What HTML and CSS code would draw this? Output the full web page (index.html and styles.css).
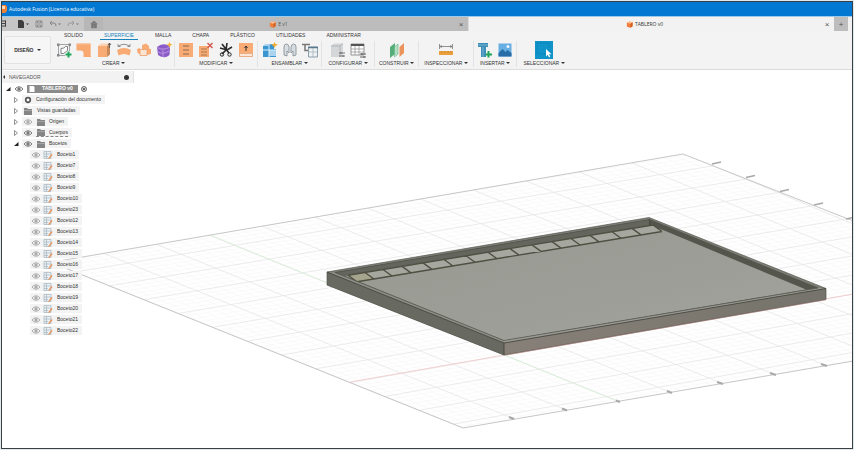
FILE: index.html
```html
<!DOCTYPE html>
<html lang="es">
<head>
<meta charset="utf-8">
<title>Autodesk Fusion (Licencia educativa)</title>
<link rel="stylesheet" href="styles.css">
</head>
<body>
<svg class="defs" aria-hidden="true">
  <symbol id="eye" viewBox="0 0 10 8"><path d="M1 4Q5-.5 9 4Q5 8.500 1 4Z" fill="#fff" stroke="currentColor"/><circle cx="5" cy="4" r="1.700" fill="currentColor"/></symbol>
  <symbol id="folder" viewBox="0 0 10 8"><path d="M1 1h3l1 1h4v6H1z" fill="#858585"/><path d="M1 3.500h8" stroke="#b5b5b5" stroke-width=".7"/></symbol>
  <symbol id="sketch" viewBox="0 0 10 8"><path d="M1 .5h7v7H1zM3.500.5v7M1 3h7M1 5.500h4" fill="#edf1f4" stroke="#a5b4bf" stroke-width=".7"/><path d="M5 7.500L8.500 3l1 1L6.500 7.500z" fill="#e98b50"/></symbol>
  <symbol id="closed" viewBox="0 0 6 8"><path d="M1.500 1.500L4.500 4L1.500 6.500z" fill="#fff" stroke="#777" stroke-width=".8"/></symbol>
  <symbol id="open" viewBox="0 0 6 8"><path d="M5.500 2v4H1z" fill="#222"/></symbol>
  <symbol id="cube" viewBox="0 0 8 8"><path d="M1 2l3-1.500L7.500 1.500V6L5 7.800L1 6.500z" fill="#ee7f3c"/><path d="M1 2l3-1.500L7.500 1.500L5 3z" fill="#ffc299"/><path d="M5 3l2.500-1.500V6L5 7.800z" fill="#d4601f"/></symbol>
</svg>
<div class="window">
  <header class="title"><svg viewBox="0 0 6 8"><path d="M0 0h4l1 2v4l-2 2H0z" fill="#ef8136"/><path d="M0 1h3v3H0z" fill="#ffd9b8"/></svg><h1>Autodesk Fusion (Licencia educativa)</h1></header>
  <div class="docs">
    <div class="quick">
      <button aria-label="Panel de datos"><svg viewBox="0 0 10 10"><path d="M0 2h4M0 4.500h4M0 7h4M3.500 1.500v6" stroke="#444" fill="none"/></svg></button>
      <button aria-label="Archivo"><svg viewBox="0 0 14 10"><path d="M2 1h4l2 2v6H2z" fill="#3e3e3e"/><path d="M10 4.500h3L11.500 6z" fill="#333"/></svg></button>
      <button aria-label="Guardar"><svg viewBox="0 0 10 10"><path d="M2 2h6v6H2zM3.500 2v2h3V2M3.500 8V6h3v2" fill="none" stroke="#888" stroke-width=".9"/></svg></button>
      <button aria-label="Deshacer"><svg viewBox="0 0 14 10"><path d="M4 2L2 4l2 2M2 4h4q2 0 2 3" fill="none" stroke="#858585"/><path d="M10 4.500h3L11.500 6z" fill="#777"/></svg></button>
      <button aria-label="Rehacer"><svg viewBox="0 0 14 10"><path d="M6 2l2 2l-2 2M8 4H4Q2 4 2 7" fill="none" stroke="#999"/><path d="M10 4.500h3L11.500 6z" fill="#777"/></svg></button>
      <button class="home" aria-label="Inicio"><svg viewBox="0 0 10 10"><path d="M1.500 5L5 2l3.500 3M2.500 4.500V9h2V6.500h1V9h2V4.500z" fill="#777" stroke="#777" stroke-width=".6"/></svg></button>
    </div>
    <div class="doc idle"><button class="name"><svg><use href="#cube"/></svg>E v1</button><button class="close" aria-label="Cerrar E v1">×</button></div>
    <div class="doc"><button class="name"><svg><use href="#cube"/></svg>TABLERO v0</button><button class="close" aria-label="Cerrar TABLERO v0">×</button></div>
    <button class="add" aria-label="Nuevo diseño">+</button>
  </div>
  <div class="ribbon">
    <button class="mode">DISEÑO <i class="caret"></i></button>
    <div class="panel">
      <nav class="tabs">
        <button>SOLIDO</button><button class="on">SUPERFICIE</button><button>MALLA</button><button>CHAPA</button><button>PLÁSTICO</button><button>UTILIDADES</button><button>ADMINISTRAR</button>
      </nav>
      <div class="groups">
        <section class="group"><div class="tools">
          <button aria-label="Crear boceto"><svg viewBox="0 0 18 18"><path d="M4 3.500h10M3.500 4v10M14.500 4v6M4 14.500h6" fill="none" stroke="#8b9297" stroke-width=".8"/><path d="M6 12.500V7.500Q9.500 7.500 10.500 5.500H12.500v4L8.500 12.500z" fill="#fff" stroke="#666" stroke-width=".8"/><path d="M2 2.500h2.500v2.500H2zM13.500 2.500H16V5h-2.500zM2 13h2.500v2.500H2z" fill="#888"/><path d="M13.500 10.500v6M10.500 13.500h6" stroke="#20a45a" stroke-width="2"/></svg></button>
          <button aria-label="Parche"><svg viewBox="0 0 18 18"><path d="M1.500 2.500H16v13.500H8.500V12Q8.500 9.500 5.500 9.500H1.500z" fill="#f8a871"/><path d="M2 3h13.500v12" fill="none" stroke="#fcc29b"/></svg></button>
          <button aria-label="Extruir"><svg viewBox="0 0 18 18"><path d="M3 5l3-2.500h9L12 5z" fill="#ffd0b0"/><path d="M3 5h9v11H3z" fill="#f8ab75"/><path d="M12 5l3-2.500v11L12 16z" fill="#c98a5c"/><path d="M14.500 7V2M13 4L14.500 2L16 4" fill="none" stroke="#555" stroke-width=".9"/></svg></button>
          <button aria-label="Revolución"><svg viewBox="0 0 18 18"><path d="M2 9Q9 5 16 9L14.500 14.500Q9 11.500 3.500 14.500z" fill="#f8ab75"/><path d="M3 5.500Q9 1 15 5.500M3 3v2.500h2.500M15 3v2.500h-2.500" fill="none" stroke="#777" stroke-width=".8"/></svg></button>
          <button aria-label="Barrido"><svg viewBox="0 0 18 18"><path d="M2 8l3-1v6l-2.500-1zM12 7l4 1v5l-4 1z" fill="#f8ab75"/><path d="M7 4l4-1.500L14 5v4H7z" fill="#f8ab75"/><path d="M5 8.500h7v6H5z" fill="#fde4d2" stroke="#eb9f6d" stroke-width=".8"/></svg></button>
          <button aria-label="Crear forma"><svg viewBox="0 0 18 18"><path d="M2 6Q8 1 15 5.500L14.500 14q-5 4.500-11.500 0z" fill="#8b5cc8"/><path d="M2.500 6.500Q8 10 15 6M8 8.500V16M3 11q5 3 11-1" fill="none" stroke="#bb9be0" stroke-width=".9"/><path d="M14.500 1l1 2l2 .5l-2 1l-1 2l-1-2l-2-1l2-.5z" fill="#f4b22e"/></svg></button>
        </div><button class="label">CREAR <i class="caret"></i></button></section>
        <section class="group"><div class="tools">
          <button aria-label="Recortar"><svg viewBox="0 0 18 18"><path d="M2 2h14v14H2z" fill="#f8ab75"/><path d="M6 5h6M6 9h6M6 13h6" stroke="#8b6b50"/></svg></button>
          <button aria-label="Anular recorte"><svg viewBox="0 0 18 18"><path d="M2 5h10v11H2z" fill="#f8ab75"/><path d="M4 8h6M4 11h6M4 14h6" stroke="#a5794f"/><path d="M10.500 2l5 5M15.500 2l-5 5" stroke="#d65b4e" stroke-width="1.500"/></svg></button>
          <button aria-label="Tijeras"><svg viewBox="0 0 18 18"><path d="M5 3l7 9M10 2l-1 7l-4 4M3 7l7 2l5-3" fill="none" stroke="#2a2a2a" stroke-width="1.600"/><circle cx="5" cy="13.500" r="1.700" fill="none" stroke="#222"/><circle cx="12.500" cy="13.500" r="1.700" fill="none" stroke="#222"/></svg></button>
          <button aria-label="Extender"><svg viewBox="0 0 18 18"><path d="M2 2h14v10H2z" fill="#f8ab75"/><path d="M2.500 12.500h13v3h-13z" fill="#ffe6d6" stroke="#e2925f" stroke-width=".7"/><path d="M9 10V5M7.500 7L9 5l1.500 2" fill="none" stroke="#333"/></svg></button>
        </div><button class="label">MODIFICAR <i class="caret"></i></button></section>
        <section class="group"><div class="tools">
          <button aria-label="Nuevo componente"><svg viewBox="0 0 18 18"><path d="M2 5h6V3h5v5h2v8H2z" fill="#3a96d0"/><path d="M2 5l2-2h6L8 5zM8 9h7v6H8z" fill="#a9d3ef"/><path d="M2 9h13M8 5v11" stroke="#d9effc"/><path d="M13.500 1l1 2l2.500 .5l-2.500 1.500L13.500 7l-1-2l-2.500-1.500l2.500-.5z" fill="#f1ad2f"/></svg></button>
          <button aria-label="Unión"><svg viewBox="0 0 18 18"><path d="M3 14V6q0-3 2.500-3Q7.500 3 8 6v6l-2-2v5zM15 14V6q0-3-2.500-3Q10.500 3 10 6v6l2-2v5z" fill="#d7dde0" stroke="#8a949b" stroke-width=".9"/></svg></button>
          <button aria-label="Construcción"><svg viewBox="0 0 18 18"><path d="M1 3.500h8M4 3.500v6h3" fill="none" stroke="#777" stroke-width="1.500"/><path d="M7.500 6h9v10h-9z" fill="#eef1f3" stroke="#8595a0" stroke-width=".9"/><path d="M7 6.500h10" stroke="#57798f" stroke-width="1.500"/><path d="M8 11h8M12 7v9" stroke="#9cadb9" stroke-width=".7"/></svg></button>
        </div><button class="label">ENSAMBLAR <i class="caret"></i></button></section>
        <section class="group"><div class="tools">
          <button aria-label="Configurar diseño"><svg viewBox="0 0 18 18"><path d="M2 5l3-2.500h9v11L11 16H2z" fill="#d4d6d8"/><path d="M2 5h9v11M11 5l3-2.500" fill="none" stroke="#b2b6b9"/><path d="M10 12h6M10 15h6M12 11v2M14 14v2" stroke="#666" stroke-width=".9"/></svg></button>
          <button aria-label="Tabla de configuración"><svg viewBox="0 0 18 18"><path d="M2 3h13v11H2z" fill="#fff" stroke="#888" stroke-width=".9"/><path d="M2 4h13" stroke="#555" stroke-width="2"/><path d="M2 8h13M2 11h13M6 5v9M10 5v9" stroke="#999" stroke-width=".8"/><path d="M11 13h6M11 16h6M13 12v2M15 15v2" stroke="#555" stroke-width=".9"/></svg></button>
        </div><button class="label">CONFIGURAR <i class="caret"></i></button></section>
        <section class="group"><div class="tools">
          <button aria-label="Plano de desfase"><svg viewBox="0 0 18 18"><path d="M2 6l5-4v11l-5 4z" fill="#55ad79"/><path d="M6.500 6l3.500-3v10l-3.500 3z" fill="#b5dfc5" stroke="#62b384" stroke-width=".6"/><path d="M11.500 6l4.500-4v10l-4.500 4z" fill="#eb925d"/></svg></button>
        </div><button class="label">CONSTRUIR <i class="caret"></i></button></section>
        <section class="group"><div class="tools">
          <button aria-label="Medir"><svg viewBox="0 0 18 18"><path d="M2.500 5.500h13M2.500 3v5M15.500 3v5M5 4.500L3 5.500L5 6.500M13 4.500l2 1L13 6.500" fill="none" stroke="#777" stroke-width=".8"/><path d="M2 10h14v4H2z" fill="#eda13d"/><path d="M5 10v2M8 10v2M11 10v2M14 10v2" stroke="#b98433" stroke-width=".7"/></svg></button>
        </div><button class="label">INSPECCIONAR <i class="caret"></i></button></section>
        <section class="group"><div class="tools">
          <button aria-label="Insertar derivado"><svg viewBox="0 0 18 18"><path d="M2 2h10v4h-2v10H5V6H2z" fill="#3d8eb8"/><path d="M2 4h10M7 6v10" stroke="#8cbfd9" stroke-width=".8"/><path d="M12.500 10v6.500M9.500 13.500H16" stroke="#20a45a" stroke-width="2"/></svg></button>
          <button aria-label="Insertar imagen"><svg viewBox="0 0 18 18"><path d="M2.500 2.500h13v13h-13z" fill="#67afe2"/><path d="M2.500 12l4-4l3 3l2-2l4 3v3.500h-13z" fill="#286ca8"/><circle cx="12" cy="5.500" r="1.500" fill="#eaf6ff"/></svg></button>
        </div><button class="label">INSERTAR <i class="caret"></i></button></section>
        <section class="group"><div class="tools">
          <button aria-label="Seleccionar"><svg viewBox="0 0 18 18"><path d="M0 0h18v18H0z" fill="#0f93c9"/><path d="M2 2h12v11H2z" fill="none" stroke="#0980b2" stroke-dasharray="1.500"/><path d="M11 8v7.500l1.700-1.700l1.300 2.700l1.300-.7l-1.300-2.500H16.500z" fill="#fff"/></svg></button>
        </div><button class="label">SELECCIONAR <i class="caret"></i></button></section>
      </div>
    </div>
  </div>
  <main class="canvas">
    <svg class="scene" viewBox="2 69 850 379" preserveAspectRatio="xMinYMin slice" role="img" aria-label="Tablero">
      <defs>
        <linearGradient id="floor" x1="0" y1="0" x2="1" y2="1"><stop offset="0" stop-color="#979991"/><stop offset=".6" stop-color="#9c9e97"/><stop offset="1" stop-color="#a2a49d"/></linearGradient>
        <linearGradient id="front"><stop offset="0" stop-color="#878078"/><stop offset="1" stop-color="#75736b"/></linearGradient>
        <clipPath id="area"><path d="M51 261.400L683 153L1101 317.500L463 427z"/></clipPath>
      </defs>
      <g clip-path="url(#area)"><path id="minor" class="minor"/><path id="major" class="major"/></g>
      <path d="M350 381L982 270.500" stroke="#f3c6c6" stroke-width=".8"/>
      <path d="M210 234L618 400.500" stroke="#d5efd5" stroke-width=".8"/>
      <path d="M51 261.400L683 153L1101 317.500L463 427z" fill="none" stroke="#c0c0c0" stroke-width=".9"/>
      <path d="M712 163l9-2M746 176.500l9-2M780 190.500l9-2M814 204l9-2M846 218l9-2" stroke="#a8a8a8" stroke-width="1.500"/>
      <path d="M509 416l5 2M562 407.500l5 2M616 399.500l4 1.500M667 390l5 2M717 381l6 2M770 372l6 2M821 363l6 2" stroke="#a8a8a8" stroke-width="2"/>
      <path d="M327 271L649 216.500L826 287.500V298.500L504 354L327 284z" fill="#7e8078"/>
      <path d="M335 271.500L649.500 218.500L818 287L504 339.500z" fill="#54554c"/>
      <path d="M335 271.500L649.500 218.500V224.500L345 275z" fill="#64655c"/>
      <path d="M345 275L649 224.700L663 229L806 288.500L504 339.500L341 273.500z" fill="url(#floor)"/>
      <path d="M348 274.300L653 224L662 230.500L357 280.800z" fill="#a6a79e"/>
      <path d="M348 274.300L365 271.500L374 278L357 280.800z" fill="#a5a58d"/>
      <path id="slots" class="slots"/>
      <path d="M327 271L504 342V354L327 284z" fill="#686a62"/>
      <path d="M504 342L826 287.500V298.500L504 354z" fill="url(#front)"/>
      <path d="M327 271L335 271.500L504 339.500V342z" fill="#8d8f87"/>
      <path d="M504 339.500L818 287L826 287.500L504 342z" fill="#9b9b93"/>
      <path d="M327 271L649 216.500L826 287.500V298.500L504 354L327 284z" fill="none" stroke="#55564f" stroke-width=".7"/>
      <path d="M335 271.500L504 339.500L818 287L649.500 218.500z" fill="none" stroke="#50514a" stroke-width=".7"/>
      <path d="M327 271L504 342L826 287.500M504 342V354" fill="none" stroke="#3d3e38" stroke-width=".8"/>
      <path d="M649.500 218.500V224.500" stroke="#404139" stroke-width=".8"/>
      <path d="M506 354L826 298.800" stroke="#b98a85" stroke-width=".6"/>
    </svg>
    <aside class="browser">
      <div class="head"><i class="back"></i><h2>NAVEGADOR</h2><button class="dot" aria-label="Opciones del navegador"></button></div>
      <ul class="tree">
        <li><div class="row root"><svg class="tw"><use href="#open"/></svg><svg class="ic"><use href="#eye"/></svg><span class="chip"><svg viewBox="0 0 8 8"><path d="M1.500 1h4l1 1v5h-5z" fill="#fff"/></svg>TABLERO v0</span><input type="radio" checked aria-label="Activar TABLERO v0"></div>
          <ul>
            <li><div class="row"><svg class="tw"><use href="#closed"/></svg><span class="pill"><svg class="ic" viewBox="0 0 10 8"><circle cx="5" cy="4" r="2.300" fill="#fff" stroke="#555" stroke-width="1.700"/></svg>Configuración del documento</span></div></li>
            <li><div class="row"><svg class="tw"><use href="#closed"/></svg><span class="pill wide"><svg class="ic"><use href="#folder"/></svg>Vistas guardadas</span></div></li>
            <li><div class="row"><svg class="tw"><use href="#closed"/></svg><span class="pill"><svg class="ic off"><use href="#eye"/></svg><svg class="ic"><use href="#folder"/></svg>Origen</span></div></li>
            <li><div class="row"><svg class="tw"><use href="#closed"/></svg><span class="pill"><svg class="ic"><use href="#eye"/></svg><span class="dotted"><svg class="ic"><use href="#folder"/></svg>Cuerpos</span></span></div></li>
            <li><div class="row"><svg class="tw"><use href="#open"/></svg><span class="pill"><svg class="ic"><use href="#eye"/></svg><svg class="ic"><use href="#folder"/></svg>Bocetos</span></div>
              <ul id="sketches" class="leaves"></ul>
            </li>
          </ul>
        </li>
      </ul>
    </aside>
  </main>
</div>
<script src="script.js"></script>
</body>
</html>
```
FILE: styles.css
```css
* { box-sizing: border-box; }
body { margin: 0; padding: 1px; height: 100vh; background: #dfe8ed; font: 5px/7px "Liberation Sans", Arial, sans-serif; color: #333; }
button { margin: 0; padding: 0; border: 0; background: none; font: inherit; color: inherit; }
h1, h2 { margin: 0; font: inherit; }
ul { list-style: none; margin: 0; padding: 0; }
svg { display: block; flex: none; }
.defs { position: absolute; width: 0; height: 0; }
.window { height: 100%; display: flex; flex-direction: column; border: 1px solid #3b3f42; background: #fff; overflow: hidden; }

.title { display: flex; align-items: center; gap: 1px; height: 15px; flex: none; background: #0278d2; border-bottom: 1px solid #9ccbea; color: #fff; font-family: "Open Sans", "Liberation Sans", sans-serif; }
.title svg { width: 6px; height: 8px; }

.docs { display: flex; height: 14px; flex: none; background: #f1f1f1; }
.quick { display: flex; align-items: center; gap: 4px; width: 101px; background: #c6c6c6; }
.quick svg { height: 10px; }
.quick button svg { width: 14px; }
.quick button:first-child svg, .quick button:nth-child(3) svg { width: 10px; }
.quick .home { align-self: stretch; display: flex; align-items: center; justify-content: center; flex: 1; background: #b7b7b7; }
.quick .home svg { width: 10px; }
.doc { flex: 1; display: flex; align-items: center; background: #f2f2f2; }
.doc.idle { background: #bcbcbc; border-right: 1px solid #ddd; color: #555; }
.name { flex: 1; display: flex; align-items: center; justify-content: center; gap: 2px; font-family: "Open Sans", "Liberation Sans", sans-serif; }
.name svg { width: 7px; height: 7px; }
.close { width: 14px; font-size: 8px; color: #555; }
.add { width: 14px; font-size: 8px; background: #bdbdbd; color: #555; margin-right: 4px; }

.ribbon { display: flex; flex: none; gap: 2px; padding: 0 2px; background: #f3f3f3; border-bottom: 1px solid #dcdcdc; }
.mode { width: 47px; margin: 5px 0; border: 1px solid #e2e2e2; border-radius: 2px; background: #f6f6f6; font-weight: bold; }
.mode .caret { margin-left: 2px; }
.caret { display: inline-block; border: 2px solid transparent; border-top-color: #333; border-bottom: 0; vertical-align: 1px; }
.panel { flex: 1; }
.tabs { display: flex; gap: 13px; padding-left: 7px; }
.tabs button { height: 9px; padding: 1px 4px 0; border-bottom: 1px solid transparent; }
.tabs .on { color: #1883bd; border-color: #1883bd; }
.groups { display: grid; grid-template-columns: 122px 83px 64px 53px 44px 55px 43px 54px; padding: 1px 0 2px; }
.group { display: flex; flex-direction: column; align-items: center; border-right: 1px solid #e3e3e3; }
.group:last-child { border: 0; }
.tools { display: flex; gap: 2px; padding-bottom: 1px; }
.tools svg { width: 18px; height: 18px; }
.label { height: 7px; }

.canvas { flex: 1; min-height: 0; position: relative; }
.scene { width: 100%; height: 100%; }
.minor { fill: none; stroke: #f6f6f6; stroke-width: .6; }
.major { fill: none; stroke: #e6e6e6; stroke-width: .8; }
.slots { fill: none; stroke: #504f43; stroke-width: 1.4; }

.browser { position: absolute; top: 0; left: 0; }
.head { display: flex; align-items: center; width: 132px; height: 12px; margin-top: 1px; padding: 0 4px 0 1px; gap: 4px; background: #f2f2f2; border-right: 1px solid #e2e2e2; color: #555; }
.back { border: 2px solid transparent; border-right-color: #333; border-left: 0; }
.dot { width: 5px; height: 5px; margin-left: auto; border-radius: 50%; background: #333; }
.row { display: flex; align-items: center; height: 11px; gap: 3px; padding-left: 11px; }
.root { padding-left: 3px; }
.tw { width: 6px; height: 8px; }
.ic { width: 10px; height: 8px; color: #777; }
.off { color: #aaa; }
.pill, .dotted { display: flex; align-items: center; gap: 3px; }
.pill { height: 9px; padding: 0 4px 0 1px; background: #f3f3f3; }
.wide { gap: 4px; }
.dotted { border-bottom: 1px dashed #888; }
.chip { display: flex; align-items: center; gap: 6px; height: 8px; padding: 0 5px 0 1px; background: #8b8b8b; color: #fff; font-weight: bold; }
.chip svg { width: 8px; height: 8px; }
.root input { appearance: none; width: 6px; height: 6px; margin: 0; border: 1px solid #777; border-radius: 50%; background: #333; box-shadow: inset 0 0 0 1px #fff; }
.leaves .row { padding-left: 28px; }
.leaves .pill { gap: 2px; }
.leaves .ic:last-of-type { margin-right: 2px; }
```
FILE: script.js
```js
// Ground grid: five minor cells to each major one.
const edge = (x0, y0, slope) => x => [x, y0 + slope * (x - x0)];
const left = edge(51, 261.4, 0.4019);
const right = edge(683, 153, 0.3935);
const back = edge(51, 261.4, -0.1715);
const front = edge(463, 427, -0.1716);
let minor = '';
let major = '';
const line = (a, b) => `M${a.map(n => n.toFixed(1))}L${b.map(n => n.toFixed(1))}`;
for (let n = -4; n <= 60; n++) {
  const k = n / 5;
  const across = line(left(75 + 34.4 * k), right(713 + 33.6 * k));
  const along = line(back(51 + 52.8 * k), front(463 + 51.9 * k));
  if (n % 5 === 0) major += across + along;
  else minor += across + along;
}
document.getElementById('minor').setAttribute('d', minor);
document.getElementById('major').setAttribute('d', major);

// Row of slots along the back wall of the board.
const rim = edge(348, 274.3, -0.165);
let slots = line(rim(348), rim(653)) + 'M357 280.800L662 230.500';
for (const x of [348, 365, 383, 402, 423, 444, 466, 488, 510, 532, 552, 571, 590, 612, 632, 653]) {
  const [, y] = rim(x);
  slots += line([x, y], [x + 9, y + 6.5]);
}
document.getElementById('slots').setAttribute('d', slots);

const names = [1, 7, 8, 9, 10, 23, 12, 13, 14, 15, 16, 17, 18, 19, 20, 21, 22];
document.getElementById('sketches').innerHTML = names.map(n =>
  `<li><div class="row"><span class="pill"><svg class="ic off"><use href="#eye"/></svg><svg class="ic"><use href="#sketch"/></svg>Boceto${n}</span></div></li>`
).join('');
```
